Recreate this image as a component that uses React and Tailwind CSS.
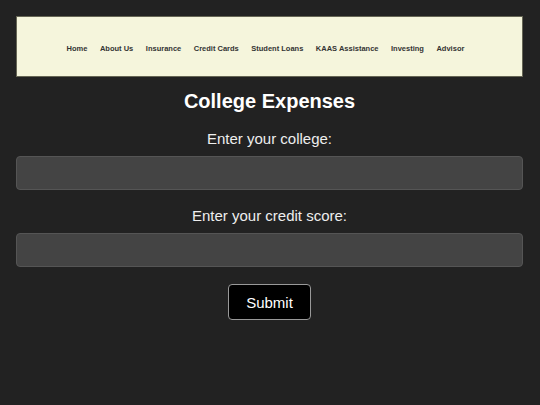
import React from 'react';

const links = ['Home', 'About Us', 'Insurance', 'Credit Cards', 'Student Loans', 'KAAS Assistance', 'Investing', 'Advisor'];

const App = () => {
  return (
    <div className="min-h-screen bg-[#222222] pt-4 pl-4 pr-[17px] font-['Liberation_Sans',Arial,sans-serif]">
      {/* Header / nav */}
      <header className="h-[61px] border border-[#666655] bg-[#f5f5dc] flex items-center justify-center pt-[4px] pr-2">
        <nav className="flex gap-[12.5px] text-[7.5px] font-bold text-[#333333]">
          {links.map((link) => (
            <a key={link} href="#" className="whitespace-nowrap">
              {link}
            </a>
          ))}
        </nav>
      </header>

      <h1 className="mt-[13px] text-center text-[20px] leading-[23px] font-bold text-white">College Expenses</h1>

      <form onSubmit={(e) => e.preventDefault()}>
        <label className="block mt-[17px] text-center text-[15px] leading-[17px] text-[#eeeeee]">
          Enter your college:
        </label>
        <input
          type="text"
          className="mt-[9px] block w-full h-[34px] rounded bg-[#444444] border border-[#555555] text-white outline-none"
        />

        <label className="block mt-[17px] text-center text-[15px] leading-[17px] text-[#eeeeee]">
          Enter your credit score:
        </label>
        <input
          type="text"
          className="mt-[9px] block w-full h-[34px] rounded bg-[#444444] border border-[#555555] text-white outline-none"
        />

        <button
          type="submit"
          className="mt-[17px] mx-auto block h-[36px] px-[17px] rounded bg-black border border-[#999999] text-[15px] leading-[17px] text-white"
        >
          Submit
        </button>
      </form>
    </div>
  );
};

export default App;
